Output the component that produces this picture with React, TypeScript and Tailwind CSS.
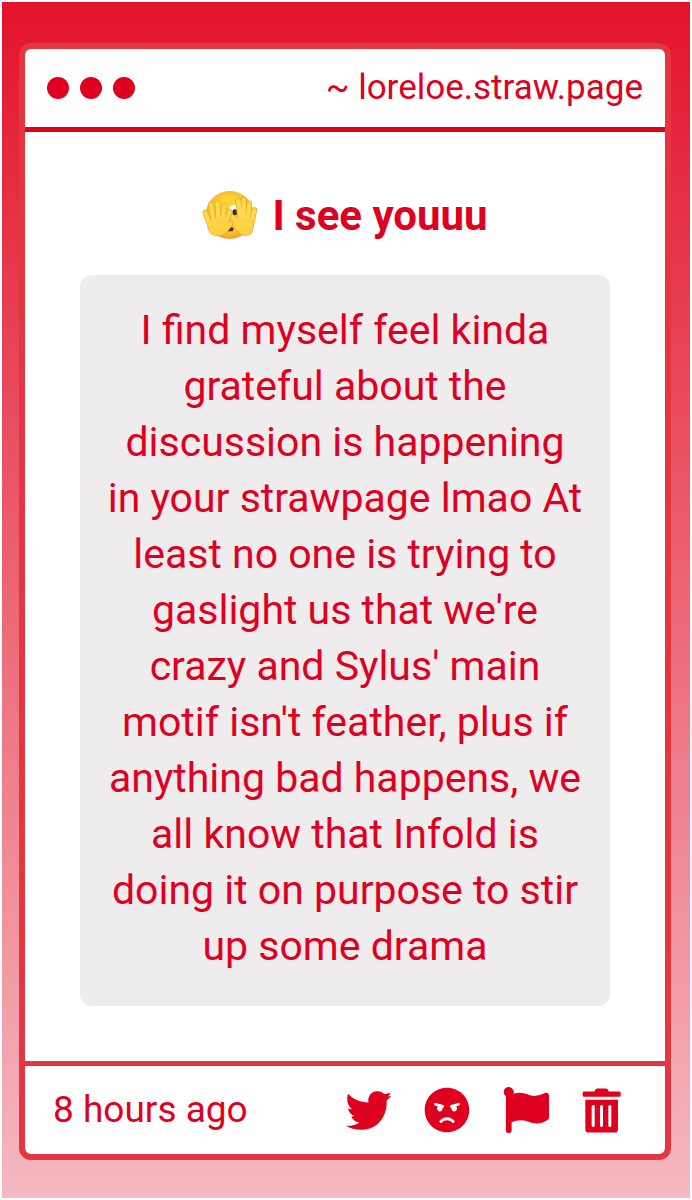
import type { ReactNode } from 'react';
import { FaAngry, FaFlag } from 'react-icons/fa';

const MESSAGE =
  "I find myself feel kinda grateful about the discussion is happening in your strawpage lmao At least no one is trying to gaslight us that we're crazy and Sylus' main motif isn't feather, plus if anything bad happens, we all know that Infold is doing it on purpose to stir up some drama";

const LEFT_FINGERS = 'M23 84L36 118M39 60L49 110M60 56L62 108M80 64L74 112M96 82L82 122';
const LEFT_PALM = 'M34 106L82 100L94 114C102 112 108 116 102 122C92 132 86 152 62 152C40 152 32 138 30 118Z';
const RIGHT_FINGERS = 'M122 48L128 108M138 46L138 108M155 56L150 110M170 76L162 114M98 94L124 114';
const RIGHT_PALM = 'M120 100L166 106C168 126 166 151 144 151C122 151 116 132 102 118L110 108Z';

function Hand({ fingers, palm }: { fingers: string; palm: string }) {
  return (
    <g strokeLinecap="round" strokeLinejoin="round">
      <g fill="none" stroke="#eda428">
        <path d={fingers} strokeWidth="17" />
        <path d={palm} strokeWidth="5" />
      </g>
      <path d={fingers} fill="none" stroke="#fed84d" strokeWidth="13" />
      <path d={palm} fill="#fed245" stroke="#fed245" strokeWidth="1" />
    </g>
  );
}

function PeekingFace() {
  return (
    <svg viewBox="13 17 168 148" className="w-14 h-[50px] shrink-0" role="img" aria-label="Peeking face">
      <defs>
        <radialGradient id="face" cx="50%" cy="45%" r="55%">
          <stop offset="0" stopColor="#fddc3d" />
          <stop offset="0.65" stopColor="#fbcd34" />
          <stop offset="1" stopColor="#f0a327" />
        </radialGradient>
      </defs>
      <circle cx="96" cy="91" r="72" fill="url(#face)" />
      <ellipse cx="109" cy="76" rx="14" ry="16" fill="#fff" />
      <ellipse cx="112" cy="83" rx="8" ry="9" fill="#42301c" />
      <path d="M80 130c6-3 22-3 28 0l-3 10H84z" fill="#4a2f14" />
      <Hand fingers={RIGHT_FINGERS} palm={RIGHT_PALM} />
      <Hand fingers={LEFT_FINGERS} palm={LEFT_PALM} />
    </svg>
  );
}

function Bird() {
  return (
    <svg viewBox="18 22 136 118" className="w-[45px] h-[39px]" fill="currentColor" aria-hidden="true">
      <path d="M24 30C38 46 60 55 86 57C82 38 96 23 112 23C122 23 129 26 134 32L153 27C151 32 148 36 144 39L154 37C151 42 147 46 141 50C144 98 114 138 68 139C48 140 32 135 18 127C34 128 48 125 58 117C46 115 38 109 34 99L45 98C33 94 26 86 24 74C28 76 32 77 36 77C23 66 18 48 24 30Z" />
    </svg>
  );
}

function Trash() {
  return (
    <svg viewBox="758 112 117 134" className="w-[39px] h-[45px]" fill="currentColor" aria-hidden="true">
      <path d="M764 122h32c1-6 4-9 9-9h24c5 0 8 3 9 9h32q4 0 4 4v8q0 4-4 4H764q-4 0-4-4v-8q0-4 4-4z" />
      <path
        fillRule="evenodd"
        d="M768 147h98v88q0 10-10 10h-78q-10 0-10-10zM787 167v57a4.500 4.500 0 0 0 9 0v-57a4.500 4.500 0 0 0-9 0zM812 167v57a4.500 4.500 0 0 0 9 0v-57a4.500 4.500 0 0 0-9 0zM837 167v57a4.500 4.500 0 0 0 9 0v-57a4.500 4.500 0 0 0-9 0z"
      />
    </svg>
  );
}

const ACTIONS: { label: string; icon: ReactNode }[] = [
  { label: 'Share on Twitter', icon: <Bird /> },
  { label: 'Block sender', icon: <FaAngry className="w-[46px] h-[46px]" /> },
  { label: 'Report', icon: <FaFlag className="w-[46px] h-[46px]" /> },
  { label: 'Delete', icon: <Trash /> },
];

export default function App() {
  return (
    <div className="min-h-screen flex bg-white p-0.5 font-[Roboto,sans-serif] text-[#df001f]">
      <div className="flex-1 flex flex-col bg-linear-to-b/srgb from-[#e3132b] to-[#f5b9c1] pl-[17px] pr-[19px] pt-[41px] pb-[38px]">
        <main className="flex-1 flex flex-col rounded-xl border-[6px] border-[#e43541] bg-white">
          <header className="flex items-center justify-between h-[83px] px-[22px] border-b-[5px] border-[#e0001b]">
            <div className="flex gap-[11px]">
              <span className="w-[22px] h-[22px] rounded-full bg-[#df001f]" />
              <span className="w-[22px] h-[22px] rounded-full bg-[#df001f]" />
              <span className="w-[22px] h-[22px] rounded-full bg-[#df001f]" />
            </div>
            <p className="text-[35px]">~ loreloe.straw.page</p>
          </header>

          <section className="flex-1 px-[55px] py-[55px]">
            <h1 className="flex items-center justify-center gap-3.5 h-14 text-[42px] font-bold">
              <PeekingFace />
              I see youuu
            </h1>
            <p className="mt-8 rounded-xl bg-[#eeecec] px-[26px] pt-[27px] pb-8 text-center text-[41px] leading-[56px]">
              {MESSAGE}
            </p>
          </section>

          <footer className="flex items-center justify-between h-[93px] pl-7 pr-11 border-t-[5px] border-[#e43541]">
            <time className="text-[37px]">8 hours ago</time>
            <div className="flex items-center gap-[33px]">
              {ACTIONS.map((action) => (
                <button key={action.label} type="button" aria-label={action.label}>
                  {action.icon}
                </button>
              ))}
            </div>
          </footer>
        </main>
      </div>
    </div>
  );
}
